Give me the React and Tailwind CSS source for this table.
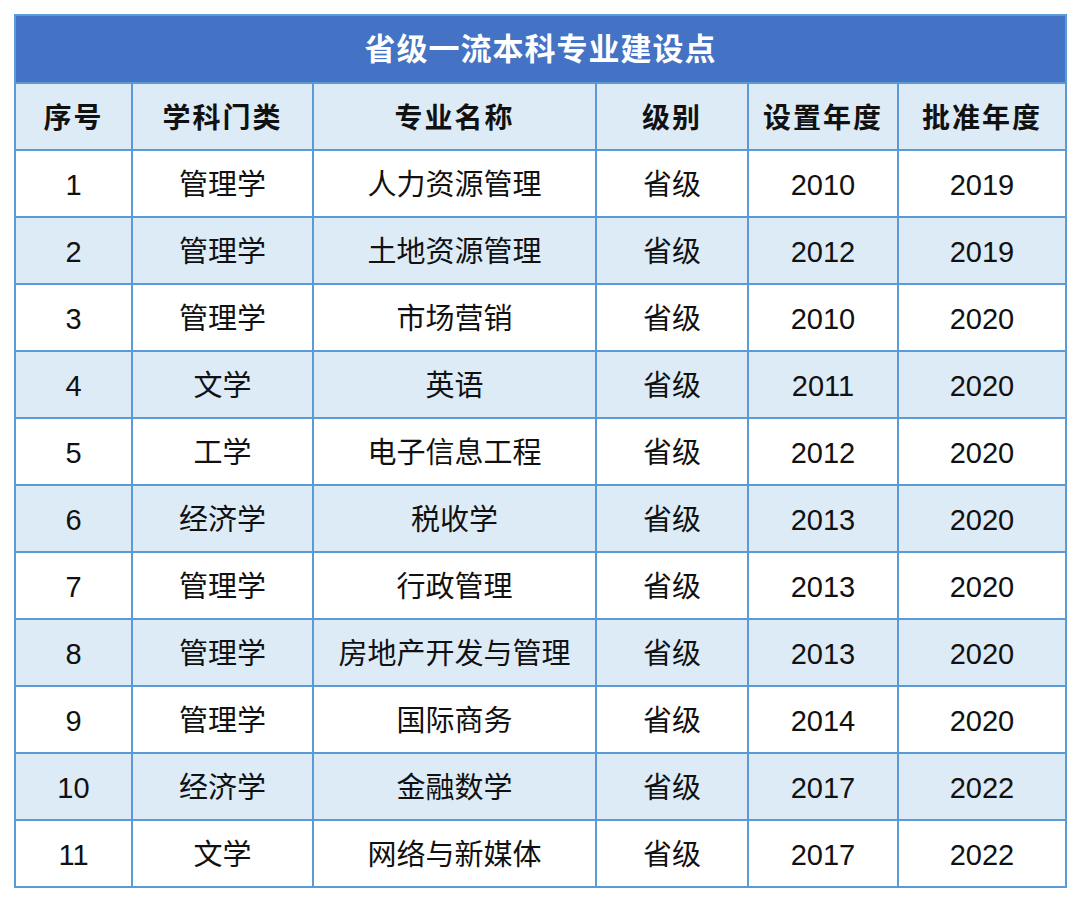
import React from 'react';

const rows = [
  ['1', '管理学', '人力资源管理', '省级', '2010', '2019'],
  ['2', '管理学', '土地资源管理', '省级', '2012', '2019'],
  ['3', '管理学', '市场营销', '省级', '2010', '2020'],
  ['4', '文学', '英语', '省级', '2011', '2020'],
  ['5', '工学', '电子信息工程', '省级', '2012', '2020'],
  ['6', '经济学', '税收学', '省级', '2013', '2020'],
  ['7', '管理学', '行政管理', '省级', '2013', '2020'],
  ['8', '管理学', '房地产开发与管理', '省级', '2013', '2020'],
  ['9', '管理学', '国际商务', '省级', '2014', '2020'],
  ['10', '经济学', '金融数学', '省级', '2017', '2022'],
  ['11', '文学', '网络与新媒体', '省级', '2017', '2022'],
];

const headers = ['序号', '学科门类', '专业名称', '级别', '设置年度', '批准年度'];

export default function App() {
  return (
    <div className="w-[1080px] h-[904px] bg-white pt-[14px] pl-[14px] font-['Liberation_Sans','Noto_Sans_CJK_SC',sans-serif]">
      <table className="w-[1051px] border-collapse table-fixed text-[#111]">
        <colgroup>
          <col className="w-[117px]" />
          <col className="w-[181px]" />
          <col className="w-[283px]" />
          <col className="w-[152px]" />
          <col className="w-[150px]" />
          <col className="w-[168px]" />
        </colgroup>
        <thead>
          <tr className="h-[68px]">
            <th
              colSpan={6}
              className="border-2 border-[#5b9bd5] bg-[#4472c4] text-white text-[31px] font-bold tracking-[1px] text-center pt-[2px]"
            >
              省级一流本科专业建设点
            </th>
          </tr>
          <tr className="h-[67px] bg-[#ddebf7]">
            {headers.map((h) => (
              <th key={h} className="border-2 border-[#5b9bd5] text-[28px] font-bold tracking-[2px] text-center pt-[5px]">
                {h}
              </th>
            ))}
          </tr>
        </thead>
        <tbody>
          {rows.map((r, i) => (
            <tr key={r[0]} className={`h-[67px] ${i % 2 === 1 ? 'bg-[#ddebf7]' : 'bg-white'}`}>
              {r.map((c, j) => (
                <td key={j} className="border-2 border-[#5b9bd5] text-[29px] text-center pt-[4px]">
                  {c}
                </td>
              ))}
            </tr>
          ))}
        </tbody>
      </table>
    </div>
  );
}
